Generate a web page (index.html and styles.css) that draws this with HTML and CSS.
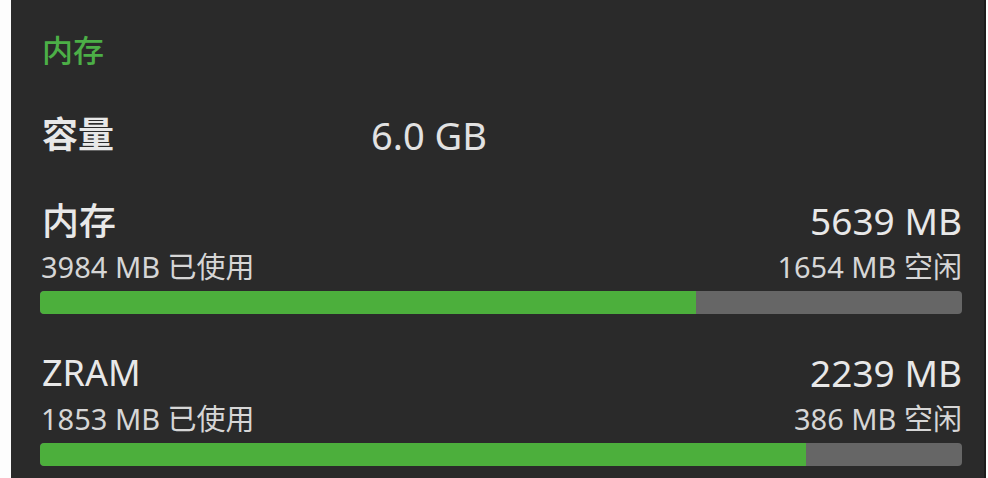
FILE: index.html
```html
<!doctype html>
<html lang="zh-CN">
    <head>
        <meta charset="UTF-8" />
        <meta name="viewport" content="width=device-width, initial-scale=1.0" />
        <title>内存</title>
        <link rel="stylesheet" href="styles.css">
    </head>
    <body>
        <div class="card">
            <div class="section-title">内存</div>

            <div class="capacity">
                <div class="capacity-label">容量</div>
                <div class="capacity-value">6.0 GB</div>
            </div>

            <div class="meter">
                <div class="meter-head">
                    <span class="meter-name">内存</span>
                    <span class="meter-total">5639 MB</span>
                </div>
                <div class="meter-sub">
                    <span>3984 MB 已使用</span>
                    <span>1654 MB 空闲</span>
                </div>
                <div class="bar">
                    <div class="bar-fill" style="width: 71.1%"></div>
                </div>
            </div>

            <div class="meter">
                <div class="meter-head">
                    <span class="meter-name latin">ZRAM</span>
                    <span class="meter-total">2239 MB</span>
                </div>
                <div class="meter-sub">
                    <span>1853 MB 已使用</span>
                    <span>386 MB 空闲</span>
                </div>
                <div class="bar">
                    <div class="bar-fill" style="width: 83.1%"></div>
                </div>
            </div>
        </div>
    </body>
</html>
```

FILE: styles.css
```css
body {
    margin: 0;
    background-color: #fdfdfd;
    font-family: "Noto Sans", "Noto Sans CJK SC", sans-serif;
}

.card {
    margin-left: 11px;
    width: 975px;
    height: 478px;
    box-sizing: border-box;
    padding: 30px 22px 0 29px;
    background-color: #2a2a2a;
    border-right: 2px solid #1c1c1c;
    color: #e8e8e8;
}

.section-title {
    color: #4caf47;
    font-size: 31px;
    font-weight: 500;
    line-height: 40px;
    padding-left: 2px;
}

.capacity {
    display: flex;
    margin-top: 41px;
    line-height: 48px;
    padding-left: 2px;
}

.capacity-label {
    width: 329px;
    font-size: 36px;
    font-weight: 700;
}

.capacity-value {
    font-size: 38px;
    color: #e2e2e2;
}

.meter {
    margin-top: 40px;
}

.meter + .meter {
    margin-top: 37px;
}

.meter-head {
    display: flex;
    justify-content: space-between;
    line-height: 44px;
    font-size: 37px;
    padding-left: 2px;
}

.meter-name {
    font-weight: 500;
    font-size: 37px;
}

.meter-name.latin {
    font-weight: 400;
    font-size: 36px;
}

.meter-sub {
    display: flex;
    justify-content: space-between;
    margin-top: 8px;
    font-size: 29px;
    line-height: 32px;
    color: #d6d6d6;
    padding-left: 1px;
}

.bar {
    margin-top: 8px;
    height: 23px;
    border-radius: 4px;
    background-color: #666666;
    overflow: hidden;
}

.bar-fill {
    height: 100%;
    background-color: #4caf3c;
    border-radius: 4px 0 0 4px;
}
```
